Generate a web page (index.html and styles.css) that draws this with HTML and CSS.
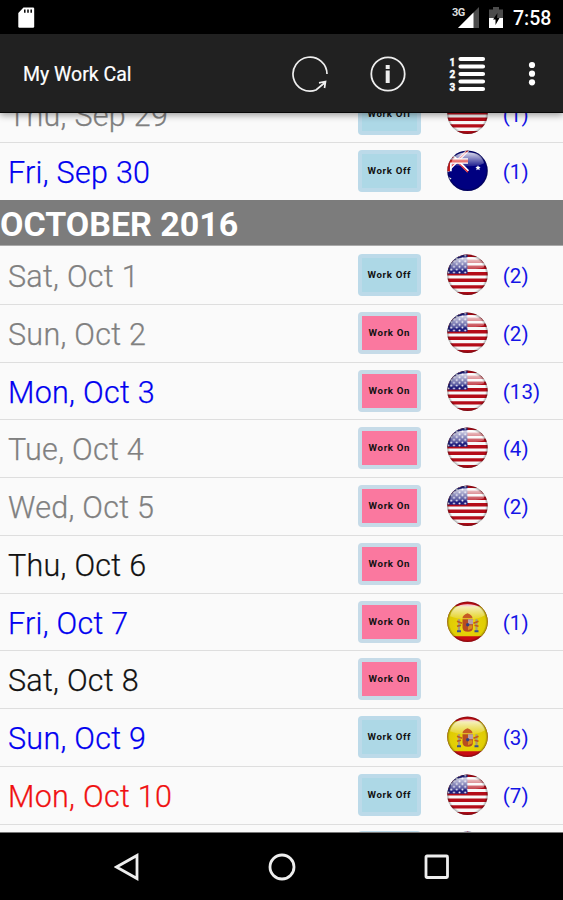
FILE: index.html
```html
<!DOCTYPE html>
<html lang="en">
<head>
<meta charset="utf-8">
<title>My Work Cal</title>
<link rel="stylesheet" href="styles.css">
</head>
<body>
<svg class="defs" width="0" height="0" aria-hidden="true">
  <defs>
    <clipPath id="disc"><circle cx="20.5" cy="20.5" r="20.2"/></clipPath>
    <linearGradient id="gloss" x1="0" y1="0" x2="0" y2="1">
      <stop offset="0" stop-color="#fff" stop-opacity=".85"/>
      <stop offset="1" stop-color="#fff" stop-opacity=".12"/>
    </linearGradient>
    <radialGradient id="rim" cx=".5" cy=".5" r=".5">
      <stop offset=".88" stop-color="#000" stop-opacity="0"/>
      <stop offset="1" stop-color="#000" stop-opacity=".35"/>
    </radialGradient>
    <radialGradient id="gold" cx=".5" cy=".65" r=".6">
      <stop offset="0" stop-color="#ecd80c"/>
      <stop offset="1" stop-color="#dcc800"/>
    </radialGradient>
    <pattern id="stars" width="5.6" height="5.6" patternUnits="userSpaceOnUse">
      <rect width="5.6" height="5.6" fill="#1c1c7c"/>
      <circle cx="1.4" cy="1.4" r=".95" fill="#fff"/>
      <circle cx="4.2" cy="4.2" r=".95" fill="#fff"/>
    </pattern>
  </defs>
  <symbol id="us" viewBox="0 0 41 41">
    <g clip-path="url(#disc)">
      <rect width="41" height="41" fill="#f8f8f8"/>
      <path d="M0 1h41M0 7h41M0 13h41M0 19.500h41M0 26h41M0 32.700h41M0 39.500h41" stroke="#b40c18" stroke-width="3.300"/>
      <rect width="20.500" height="19.500" fill="url(#stars)"/>
      <path d="M3 15Q3 3 20.500 3T37 13Q32 15 21 15T3 17z" fill="url(#gloss)"/>
    </g>
    <circle cx="20.500" cy="20.500" r="20.300" fill="url(#rim)"/>
  </symbol>
  <symbol id="au" viewBox="0 0 41 41">
    <g clip-path="url(#disc)">
      <rect width="41" height="41" fill="#000080"/>
      <path d="M0 0L21 21M21 0L0 21" stroke="#fff" stroke-width="3"/>
      <path d="M0 2L21 22M21 0L0 20" stroke="#d81c2c" stroke-width="1.200"/>
      <path d="M0 10.800h21M2 0v21" stroke="#fff" stroke-width="5.500"/>
      <path d="M0 10.800h21M1.500 0v21" stroke="#dc2020" stroke-width="3"/>
      <path d="M31 15l.8 1.600 1.800.2-1.300 1.300.4 1.900-1.700-.9-1.700.9.4-1.900-1.300-1.300 1.800-.2z" fill="#fff"/>
      <path d="M2 27l2.500 1-1.500 1.500z" fill="#fff"/>
      <path d="M4 14Q6 2 20.500 2T37 13Q32 16 22 16T4 15z" fill="url(#gloss)"/>
    </g>
    <circle cx="20.500" cy="20.500" r="20.300" fill="url(#rim)"/>
  </symbol>
  <symbol id="es" viewBox="0 0 41 41">
    <g clip-path="url(#disc)">
      <rect width="41" height="41" fill="#c80c14"/>
      <rect y="5" width="41" height="30" fill="url(#gold)"/>
      <path d="M3 15Q5 3 20.500 3T38 14Q32 18 21 18T3 15z" fill="url(#gloss)"/>
      <path d="M12 18v12M29.500 18v12" stroke="#a89c78" stroke-width="2.200"/>
      <path d="M10 20l5 2M31.500 20l-5 2M10 25l4-1M31.500 25l-4-1" stroke="#c05a1c" stroke-width="1.800"/>
      <path d="M10 30h4M27.500 30h4" stroke="#39508a" stroke-width="1.800"/>
      <path d="M15.500 17q0-3 5-5q5 2 5 5z" fill="#c65a22"/>
      <path d="M15.500 18h10.500v8q0 4.500-5.200 4.500t-5.300-4.500z" fill="#b84c20"/>
      <path d="M21 18h5v5h-5z" fill="#b9a0a4"/>
      <path d="M21 24h4.500v3l-4.500 2z" fill="#d98a20"/>
      <circle cx="20.700" cy="23.500" r="1.700" fill="#36417e"/>
    </g>
    <circle cx="20.500" cy="20.500" r="20.300" fill="url(#rim)"/>
  </symbol>
</svg>

<div class="screen">
  <div class="status">
    <svg class="sd" width="17" height="22" viewBox="0 0 17 22"><path d="M5.500 .5H15q1.200 0 1.200 1.200V19.500q0 1.200-1.200 1.200H1.500Q.3 20.700.3 19.500V6z" fill="#fff"/><path d="M6.800 2.500v3.200M10 2.500v3.200M13.200 2.500v3.200" stroke="#000" stroke-width="1.500"/></svg>
    <span class="net">3G</span>
    <svg class="signal" width="21" height="21" viewBox="0 0 21 21"><path d="M21 0V21H0z" fill="#4c4c4c"/><path d="M15.500 5.500V21H0z" fill="#fff"/></svg>
    <svg class="battery" width="14" height="21" viewBox="0 0 14 21"><path d="M4 0h6v2.500h4V21H0V2.500h4z" fill="#4c4c4c"/><path d="M0 11h14v10H0z" fill="#fff"/><path d="M8.500 6L4 12.500h2.500V18L10.500 11H8z" fill="#000"/></svg>
    <span class="clock">7:58</span>
  </div>

  <div class="appbar">
    <h1>My Work Cal</h1>
    <svg class="refresh" width="38" height="38" viewBox="0 0 38 38" fill="none" stroke="#eee" stroke-width="1.700"><path d="M36 19A17 17 0 1 0 25 35L34 27.500M28 27.800L34.500 26.500L33.500 33"/></svg>
    <svg class="info" width="38" height="38" viewBox="0 0 38 38"><circle cx="19" cy="19" r="16.700" fill="none" stroke="#eee" stroke-width="1.800"/><path d="M16.700 10h4v4h-4zM16.700 15.500h4V28h-4z" fill="#eee"/></svg>
    <svg class="list" width="38" height="38" viewBox="0 0 38 38"><path d="M12.500 4h22.500M12.500 11.500h22.500M12.500 19h22.500M12.500 26.500h22.500M12.500 34h22.500" stroke="#fff" stroke-width="4.200" stroke-linecap="round"/><g class="digits"><text x="1.500" y="10.500">1</text><text x="1.500" y="23">2</text><text x="1.500" y="36">3</text></g></svg>
    <svg class="more" width="8" height="26" viewBox="0 0 8 26" fill="#fff"><circle cx="4" cy="4" r="3.100"/><circle cx="4" cy="12.700" r="3.100"/><circle cx="4" cy="21.300" r="3.100"/></svg>
  </div>

  <div class="viewport">
    <div class="days">
      <div class="row muted"><span class="date">Thu, Sep 29</span><span class="tag off">Work Off</span><svg class="flag"><use href="#us"/></svg><span class="count">(1)</span></div>
      <div class="row event"><span class="date">Fri, Sep 30</span><span class="tag off">Work Off</span><svg class="flag"><use href="#au"/></svg><span class="count">(1)</span></div>
      <h2>OCTOBER 2016</h2>
      <div class="row muted"><span class="date">Sat, Oct 1</span><span class="tag off">Work Off</span><svg class="flag"><use href="#us"/></svg><span class="count">(2)</span></div>
      <div class="row muted"><span class="date">Sun, Oct 2</span><span class="tag on">Work On</span><svg class="flag"><use href="#us"/></svg><span class="count">(2)</span></div>
      <div class="row event"><span class="date">Mon, Oct 3</span><span class="tag on">Work On</span><svg class="flag"><use href="#us"/></svg><span class="count">(13)</span></div>
      <div class="row muted"><span class="date">Tue, Oct 4</span><span class="tag on">Work On</span><svg class="flag"><use href="#us"/></svg><span class="count">(4)</span></div>
      <div class="row muted"><span class="date">Wed, Oct 5</span><span class="tag on">Work On</span><svg class="flag"><use href="#us"/></svg><span class="count">(2)</span></div>
      <div class="row"><span class="date">Thu, Oct 6</span><span class="tag on">Work On</span></div>
      <div class="row event"><span class="date">Fri, Oct 7</span><span class="tag on">Work On</span><svg class="flag"><use href="#es"/></svg><span class="count">(1)</span></div>
      <div class="row"><span class="date">Sat, Oct 8</span><span class="tag on">Work On</span></div>
      <div class="row event"><span class="date">Sun, Oct 9</span><span class="tag off">Work Off</span><svg class="flag"><use href="#es"/></svg><span class="count">(3)</span></div>
      <div class="row holiday"><span class="date">Mon, Oct 10</span><span class="tag off">Work Off</span><svg class="flag"><use href="#us"/></svg><span class="count">(7)</span></div>
      <div class="row last"><span class="date"></span><span class="tag off"></span><svg class="flag"><use href="#au"/></svg></div>
    </div>
  </div>

  <div class="navbar">
    <svg width="26" height="28" viewBox="0 0 26 28"><path d="M23 2.500V25.500L2.500 14z"/></svg>
    <svg width="28" height="28" viewBox="0 0 28 28"><circle cx="14" cy="14" r="12"/></svg>
    <svg width="26" height="28" viewBox="0 0 26 28"><rect x="2" y="3" width="21.500" height="21.500" rx="1"/></svg>
  </div>
</div>
</body>
</html>
```

FILE: styles.css
```css
* { box-sizing: border-box; }
body { margin: 0; background: #000; font-family: Roboto, "Liberation Sans", sans-serif; }
.defs { position: absolute; }
.screen { width: 563px; height: 900px; overflow: hidden; display: flex; flex-direction: column; }

.status { height: 34px; flex: none; background: #000; color: #fff; display: flex; align-items: flex-start; padding: 7px 12px 0 18px; }
.net { position: relative; z-index: 1; margin-left: auto; width: 12px; font-size: 11px; line-height: 11px; font-weight: 700; letter-spacing: -0.5px; color: #ddd; white-space: nowrap; }
.signal { margin-left: -6px; }
.signal, .battery { flex: none; }
.battery { margin-left: 10px; }
.clock { margin-left: 10px; width: 38px; font-size: 19.5px; line-height: 23px; font-weight: 500; white-space: nowrap; }

.appbar { height: 79px; flex: none; background: #212121; border-bottom: 1px solid #080808; display: flex; align-items: center; padding: 2px 0 0 23px; position: relative; z-index: 2; box-shadow: 0 2px 7px rgba(0, 0, 0, .4); }
h1 { margin: 0; width: 268px; color: #fff; font-size: 19.5px; font-weight: 400; line-height: 24px; padding-top: 1px; -webkit-text-stroke: .2px; }
.refresh { flex: none; }
.info { margin-left: 40px; flex: none; }
.list { margin-left: 41px; flex: none; }
.more { margin-left: 42px; flex: none; }
.digits { fill: #fff; stroke: #fff; stroke-width: .4px; font-size: 10px; font-weight: 700; }

.viewport { height: 720px; flex: none; background: #fafafa; overflow: hidden; border-bottom: 1px solid #777; }
.days { margin-top: -28.5px; }
.row { height: 57.75px; display: flex; align-items: flex-start; padding: 8px 0 0 8px; box-shadow: 0 1px #dedede; color: #111; }
.date { width: 349.7px; font-size: 30.5px; line-height: 45px; font-weight: 300; letter-spacing: .28px; white-space: nowrap; -webkit-text-stroke: .25px; }
.muted { color: #808080; }
.event { color: #0000f0; }
.holiday { color: #f01010; }
.tag { width: 63.3px; height: 42px; flex: none; padding: 4px; border-radius: 4px; background: #c6dbe8; color: #111; font-size: 9.7px; line-height: 34px; font-weight: 700; letter-spacing: .65px; text-align: center; white-space: nowrap; }
.off { background: linear-gradient(#add8e6, #add8e6) center / 55px 34px no-repeat #bcdae9; }
.on { background: linear-gradient(#fa789f, #fa789f) center / 55px 34px no-repeat #c6dbe8; }
.flag { width: 41px; height: 41.5px; margin-left: 25.7px; flex: none; }
.count { margin-left: 15px; color: #1414e6; font-size: 20.5px; line-height: 45px; letter-spacing: .1px; }
.last { padding-top: 7px; }
h2 { margin: 0; height: 46px; background: #7c7c7c; color: #fff; font-size: 34px; font-weight: 700; line-height: 48px; white-space: nowrap; border-bottom: 1px solid #aaa; }

.navbar { height: 67px; flex: none; background: #000; display: flex; justify-content: center; align-items: center; gap: 128px; }
.navbar svg { fill: none; stroke: #eee; stroke-width: 2.8; }
```
